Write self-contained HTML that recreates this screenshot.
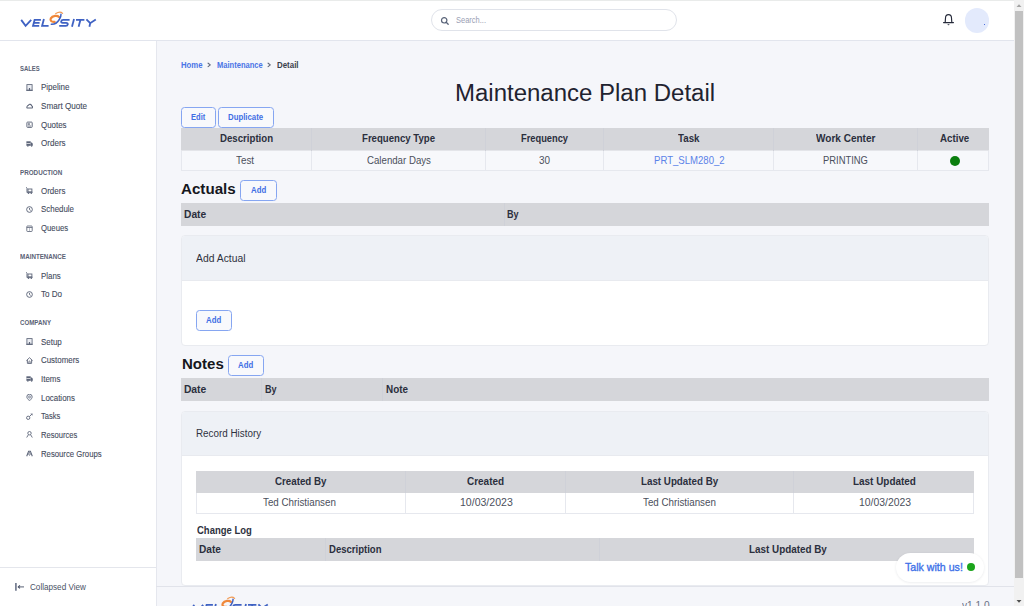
<!DOCTYPE html>
<html><head><meta charset="utf-8">
<style>
*{box-sizing:border-box;margin:0;padding:0}
html,body{width:1024px;height:606px;overflow:hidden;background:#f5f6fa;font-family:"Liberation Sans",sans-serif;position:relative}
.a{position:absolute}
.t{position:absolute;white-space:nowrap;line-height:normal;transform-origin:0 0}
</style></head><body>
<div class="a" style="left:0.00px;top:0.00px;width:1014.00px;height:1.00px;background:#e9ebea"></div>
<div class="a" style="left:0.00px;top:1.00px;width:1014.00px;height:39.00px;background:#fff"></div>
<div class="a" style="left:0.00px;top:40.00px;width:1014.00px;height:1.00px;background:#e2e5ed"></div>
<div class="a" style="left:0.00px;top:41.00px;width:156.00px;height:565.00px;background:#fff"></div>
<div class="a" style="left:156.00px;top:41.00px;width:1.00px;height:565.00px;background:#e5e7ee"></div>
<svg class="a" style="left:0px;top:0px;overflow:visible" width="100" height="35" viewBox="0 0 100 35">
<g fill="none" stroke="#3f62c3" stroke-width="1.8" stroke-linejoin="miter" stroke-linecap="butt">
<path d="M21.2 19.9 L25.6 25.9 L31.2 19.9"/>
<path d="M40.9 19.9 H34.6 L33.0 25.9 H39.2 M33.8 22.9 H39.6"/>
<path d="M43.9 19.1 L42.1 25.9 H48.6"/>
<path d="M69.6 19.9 H63.2 C60.8 19.9 60.4 22.9 62.6 22.9 H66.2 C68.6 22.9 68.2 25.9 65.8 25.9 H59.2"/>
<path d="M74.0 19.1 L72.0 26.7"/>
<path d="M76.0 19.9 H84.4 M80.4 19.9 L78.6 26.7"/>
<path d="M86.4 19.4 L90.2 23.2 L95.8 19.4 M90.2 23.2 L89.4 26.7"/>
</g>
<path d="M59.0 16.9 C57.5 15.2 52.5 15.3 50.8 18.4 C49.8 20.5 51.5 22.3 54.6 21.8" fill="none" stroke="#f0883a" stroke-width="2.2" stroke-linecap="round"/>
<path d="M51.3 24.3 C54 24.5 57.5 22.5 59.3 19.5 C60.6 17.3 61.2 15.5 61 14.2" fill="none" stroke="#3f62c3" stroke-width="1.5" stroke-linecap="round"/>
<path d="M55.8 13.6 C58 12.2 61 11.8 62.6 13.4" fill="none" stroke="#f29a52" stroke-width="1.2" stroke-linecap="round"/>
</svg>
<div class="a" style="left:431.00px;top:9.00px;width:246.00px;height:22.00px;background:#fff;border:1px solid #e0e3ea;border-radius:11px"></div>
<svg class="a" style="left:440px;top:15.5px" width="10" height="10" viewBox="0 0 10 10"><circle cx="4.2" cy="4.3" r="2.7" fill="none" stroke="#5a6479" stroke-width="1.2"/><line x1="6.2" y1="6.3" x2="8.2" y2="8.3" stroke="#5a6479" stroke-width="1.3" stroke-linecap="round"/></svg>
<div class="t" style="left:456.30px;top:15.00px;font-size:8.576px;font-weight:400;color:#9aa0b4;transform:scaleX(0.8746);">Search...</div>
<svg class="a" style="left:942px;top:13px" width="13" height="14" viewBox="0 0 13 14"><path d="M3.2 9.4 L3.5 5.0 C3.6 0.4 9.4 0.4 9.5 5.0 L9.8 9.4" fill="none" stroke="#252a3a" stroke-width="1.15"/><path d="M1.5 9.6 H11.5" stroke="#252a3a" stroke-width="1.05" stroke-linecap="round"/><path d="M5.5 11.2 H7.5 A1 1.1 0 0 1 5.5 11.2Z" fill="#252a3a"/></svg>
<div class="a" style="left:964.50px;top:7.90px;width:24.70px;height:24.70px;background:#e3eafc;border-radius:50%"></div>
<div class="a" style="left:984.00px;top:24.00px;width:1.00px;height:1.00px;background:#4b6fe0"></div>
<div class="t" style="left:19.90px;top:65.00px;font-size:6.831px;font-weight:700;color:#5a6275;transform:scaleX(0.8691);">SALES</div>
<div class="t" style="left:40.90px;top:82.00px;font-size:8.721px;font-weight:400;color:#444b5d;transform:scaleX(0.9180);-webkit-text-stroke:0.1px #444b5d;">Pipeline</div>
<svg class="a" style="left:26px;top:83.80px" width="7" height="7" viewBox="0 0 7 7"><rect x="0.9" y="0.6" width="5.2" height="5.6" fill="#eceef3" stroke="#5d6579" stroke-width="0.85"/><path d="M0.3 6.35 H6.7" stroke="#5d6579" stroke-width="1"/><rect x="2.9" y="4.0" width="1.2" height="2.3" fill="#5d6579"/></svg>
<div class="t" style="left:40.90px;top:101.00px;font-size:8.721px;font-weight:400;color:#444b5d;transform:scaleX(0.9303);-webkit-text-stroke:0.1px #444b5d;">Smart Quote</div>
<svg class="a" style="left:26px;top:102.47px" width="7" height="7" viewBox="0 0 7 7"><path d="M1.1 5.9 H5.9 C6.8 5.9 6.8 4.1 5.8 4.0 C5.5 2.3 3.4 1.6 2.5 3.3 C1.1 3.4 0.4 5.9 1.1 5.9Z" fill="none" stroke="#5d6579" stroke-width="1.05"/></svg>
<div class="t" style="left:40.90px;top:120.00px;font-size:8.721px;font-weight:400;color:#444b5d;transform:scaleX(0.9102);-webkit-text-stroke:0.1px #444b5d;">Quotes</div>
<svg class="a" style="left:26px;top:121.14px" width="7" height="7" viewBox="0 0 7 7"><rect x="0.9" y="1.1" width="5.3" height="5.3" rx="0.7" fill="none" stroke="#5d6579" stroke-width="0.95"/><rect x="2.1" y="2.3" width="1.7" height="1.5" fill="#5d6579"/><path d="M2 5 H5.1" stroke="#5d6579" stroke-width="0.8"/></svg>
<div class="t" style="left:40.90px;top:138.00px;font-size:8.721px;font-weight:400;color:#444b5d;transform:scaleX(0.9233);-webkit-text-stroke:0.1px #444b5d;">Orders</div>
<svg class="a" style="left:26px;top:139.81px" width="7" height="7" viewBox="0 0 7 7"><rect x="0.4" y="1.3" width="4.3" height="4.5" fill="#5d6579"/><path d="M0.4 3.5 H4.7" stroke="#fff" stroke-width="0.7"/><path d="M4.7 2.5 H5.9 L6.8 3.8 V5.8 H4.7Z" fill="#5d6579"/><circle cx="1.9" cy="6.1" r="0.75" fill="#5d6579"/><circle cx="5.6" cy="6.1" r="0.75" fill="#5d6579"/></svg>
<div class="t" style="left:19.90px;top:169.00px;font-size:6.831px;font-weight:700;color:#5a6275;transform:scaleX(0.9193);">PRODUCTION</div>
<div class="t" style="left:40.90px;top:186.00px;font-size:8.721px;font-weight:400;color:#444b5d;transform:scaleX(0.9158);-webkit-text-stroke:0.1px #444b5d;">Orders</div>
<svg class="a" style="left:26px;top:187.21px" width="7" height="7" viewBox="0 0 7 7"><path d="M0.2 0.2 L1.0 1.4 V5.6" fill="none" stroke="#5d6579" stroke-width="0.95"/><rect x="2.0" y="2.0" width="3.9" height="2.9" fill="none" stroke="#5d6579" stroke-width="0.9"/><path d="M1 5.3 H6.6" stroke="#5d6579" stroke-width="1"/><circle cx="2.5" cy="6.2" r="0.8" fill="#5d6579"/><circle cx="5.3" cy="6.2" r="0.8" fill="#5d6579"/></svg>
<div class="t" style="left:40.90px;top:204.00px;font-size:8.721px;font-weight:400;color:#444b5d;transform:scaleX(0.9074);-webkit-text-stroke:0.1px #444b5d;">Schedule</div>
<svg class="a" style="left:26px;top:205.88px" width="7" height="7" viewBox="0 0 7 7"><circle cx="3.5" cy="3.5" r="2.85" fill="none" stroke="#5d6579" stroke-width="0.95"/><path d="M3.5 1.9 V3.6 L4.7 4.4" fill="none" stroke="#5d6579" stroke-width="0.9"/></svg>
<div class="t" style="left:40.90px;top:223.00px;font-size:8.721px;font-weight:400;color:#444b5d;transform:scaleX(0.8899);-webkit-text-stroke:0.1px #444b5d;">Queues</div>
<svg class="a" style="left:26px;top:224.55px" width="7" height="7" viewBox="0 0 7 7"><rect x="0.8" y="1.0" width="5.4" height="5.5" rx="0.7" fill="none" stroke="#5d6579" stroke-width="0.85"/><path d="M0.8 2.5 H6.2" stroke="#5d6579" stroke-width="0.8"/><path d="M3.5 2.5 V6.5" stroke="#8a91a2" stroke-width="0.55"/></svg>
<div class="t" style="left:19.90px;top:253.00px;font-size:6.831px;font-weight:700;color:#5a6275;transform:scaleX(0.9112);">MAINTENANCE</div>
<div class="t" style="left:40.90px;top:271.00px;font-size:8.721px;font-weight:400;color:#444b5d;transform:scaleX(0.9082);-webkit-text-stroke:0.1px #444b5d;">Plans</div>
<svg class="a" style="left:26px;top:271.95px" width="7" height="7" viewBox="0 0 7 7"><path d="M0.2 0.2 L1.0 1.4 V5.6" fill="none" stroke="#5d6579" stroke-width="0.95"/><rect x="2.0" y="2.0" width="3.9" height="2.9" fill="none" stroke="#5d6579" stroke-width="0.9"/><path d="M1 5.3 H6.6" stroke="#5d6579" stroke-width="1"/><circle cx="2.5" cy="6.2" r="0.8" fill="#5d6579"/><circle cx="5.3" cy="6.2" r="0.8" fill="#5d6579"/></svg>
<div class="t" style="left:40.90px;top:289.00px;font-size:8.721px;font-weight:400;color:#444b5d;transform:scaleX(0.9270);-webkit-text-stroke:0.1px #444b5d;">To Do</div>
<svg class="a" style="left:26px;top:290.62px" width="7" height="7" viewBox="0 0 7 7"><circle cx="3.5" cy="3.5" r="2.85" fill="none" stroke="#5d6579" stroke-width="0.95"/><path d="M3.5 1.9 V3.6 L4.7 4.4" fill="none" stroke="#5d6579" stroke-width="0.9"/></svg>
<div class="t" style="left:19.90px;top:319.00px;font-size:6.831px;font-weight:700;color:#5a6275;transform:scaleX(0.9013);">COMPANY</div>
<div class="t" style="left:40.90px;top:337.00px;font-size:8.721px;font-weight:400;color:#444b5d;transform:scaleX(0.9121);-webkit-text-stroke:0.1px #444b5d;">Setup</div>
<svg class="a" style="left:26px;top:338.02px" width="7" height="7" viewBox="0 0 7 7"><rect x="0.9" y="0.6" width="5.2" height="5.6" fill="#eceef3" stroke="#5d6579" stroke-width="0.85"/><path d="M0.3 6.35 H6.7" stroke="#5d6579" stroke-width="1"/><rect x="2.9" y="4.0" width="1.2" height="2.3" fill="#5d6579"/></svg>
<div class="t" style="left:40.90px;top:355.00px;font-size:8.721px;font-weight:400;color:#444b5d;transform:scaleX(0.9083);-webkit-text-stroke:0.1px #444b5d;">Customers</div>
<svg class="a" style="left:26px;top:356.69px" width="7" height="7" viewBox="0 0 7 7"><path d="M0.4 3.7 L3.5 0.7 L6.6 3.7" fill="none" stroke="#5d6579" stroke-width="0.9"/><path d="M1.4 2.8 V6.4 H5.6 V2.8" fill="none" stroke="#5d6579" stroke-width="0.9"/><path d="M2.8 6.4 V4.7 A0.7 0.7 0 0 1 4.2 4.7 V6.4" fill="none" stroke="#5d6579" stroke-width="0.75"/></svg>
<div class="t" style="left:40.90px;top:374.00px;font-size:8.721px;font-weight:400;color:#444b5d;transform:scaleX(0.9145);-webkit-text-stroke:0.1px #444b5d;">Items</div>
<svg class="a" style="left:26px;top:375.36px" width="7" height="7" viewBox="0 0 7 7"><rect x="0.4" y="1.3" width="4.3" height="4.5" fill="#5d6579"/><path d="M0.4 3.5 H4.7" stroke="#fff" stroke-width="0.7"/><path d="M4.7 2.5 H5.9 L6.8 3.8 V5.8 H4.7Z" fill="#5d6579"/><circle cx="1.9" cy="6.1" r="0.75" fill="#5d6579"/><circle cx="5.6" cy="6.1" r="0.75" fill="#5d6579"/></svg>
<div class="t" style="left:40.90px;top:393.00px;font-size:8.721px;font-weight:400;color:#444b5d;transform:scaleX(0.9082);-webkit-text-stroke:0.1px #444b5d;">Locations</div>
<svg class="a" style="left:26px;top:394.03px" width="7" height="7" viewBox="0 0 7 7"><path d="M3.5 6.8 C1.4 4.9 0.8 3.7 0.8 2.9 A2.7 2.7 0 0 1 6.2 2.9 C6.2 3.7 5.6 4.9 3.5 6.8Z" fill="#e9ecf2" stroke="#5d6579" stroke-width="0.85"/><circle cx="3.5" cy="3.0" r="0.95" fill="#fff" stroke="#5d6579" stroke-width="0.7"/></svg>
<div class="t" style="left:40.90px;top:411.00px;font-size:8.721px;font-weight:400;color:#444b5d;transform:scaleX(0.8707);-webkit-text-stroke:0.1px #444b5d;">Tasks</div>
<svg class="a" style="left:26px;top:412.70px" width="7" height="7" viewBox="0 0 7 7"><circle cx="2.2" cy="4.8" r="1.65" fill="none" stroke="#5d6579" stroke-width="0.9"/><path d="M3.4 3.6 L5.4 1.6" stroke="#5d6579" stroke-width="0.9"/><path d="M4.3 0.7 L6.6 0.5 L6.4 2.8Z" fill="#5d6579"/></svg>
<div class="t" style="left:40.90px;top:430.00px;font-size:8.721px;font-weight:400;color:#444b5d;transform:scaleX(0.8684);-webkit-text-stroke:0.1px #444b5d;">Resources</div>
<svg class="a" style="left:26px;top:431.37px" width="7" height="7" viewBox="0 0 7 7"><circle cx="3.5" cy="2.2" r="1.7" fill="none" stroke="#5d6579" stroke-width="0.9"/><path d="M0.7 6.5 L2.3 3.9 M6.3 6.5 L4.7 3.9" stroke="#5d6579" stroke-width="0.9"/></svg>
<div class="t" style="left:40.90px;top:449.00px;font-size:8.721px;font-weight:400;color:#444b5d;transform:scaleX(0.8869);-webkit-text-stroke:0.1px #444b5d;">Resource Groups</div>
<svg class="a" style="left:26px;top:450.04px" width="7" height="7" viewBox="0 0 7 7"><path d="M0.7 6.2 L2.6 1.3 H4.4 L6.3 6.2" fill="none" stroke="#5d6579" stroke-width="1.05"/><ellipse cx="3.5" cy="3.9" rx="0.75" ry="1.4" fill="none" stroke="#5d6579" stroke-width="0.8"/></svg>
<div class="a" style="left:0.00px;top:567.00px;width:156.00px;height:1.00px;background:#e4e6ec"></div>
<svg class="a" style="left:14px;top:582px" width="12" height="10" viewBox="0 0 12 10"><path d="M1.9 1.1 V8.7" stroke="#737b8f" stroke-width="1.7"/><path d="M4.6 4.9 H10.0" stroke="#5d6579" stroke-width="1.05"/><path d="M5.9 3.4 L4.3 4.9 L5.9 6.4" fill="none" stroke="#4a5267" stroke-width="1.15"/></svg>
<div class="t" style="left:29.90px;top:582.00px;font-size:8.576px;font-weight:400;color:#4a5265;transform:scaleX(0.9492);">Collapsed View</div>
<div class="t" style="left:181.10px;top:61.00px;font-size:8.285px;font-weight:700;color:#4a74e6;transform:scaleX(0.9378);">Home</div>
<svg class="a" style="left:205px;top:61px" width="8" height="8" viewBox="0 0 8 8"><path d="M3.1 2.2 L5.3 3.9 L3.1 5.6" fill="none" stroke="#626a7d" stroke-width="1.15" stroke-linecap="round" stroke-linejoin="round"/></svg>
<div class="t" style="left:216.90px;top:61.00px;font-size:8.285px;font-weight:700;color:#4a74e6;transform:scaleX(0.9130);">Maintenance</div>
<svg class="a" style="left:265.2px;top:61px" width="8" height="8" viewBox="0 0 8 8"><path d="M3.1 2.2 L5.3 3.9 L3.1 5.6" fill="none" stroke="#626a7d" stroke-width="1.15" stroke-linecap="round" stroke-linejoin="round"/></svg>
<div class="t" style="left:276.70px;top:61.00px;font-size:8.285px;font-weight:700;color:#3a3f4c;transform:scaleX(0.9568);">Detail</div>
<div class="t" style="left:455.40px;top:79.00px;font-size:24.709px;font-weight:400;color:#1f2330;transform:scaleX(0.9718);">Maintenance Plan Detail</div>
<div class="a" style="left:181.00px;top:107.00px;width:35.00px;height:21.00px;border:1px solid #86a6f1;border-radius:3.5px;background:#f8f9fc"></div>
<div class="t" style="left:191.35px;top:112.00px;font-size:8.576px;font-weight:700;color:#3f6ee4;transform:scaleX(0.8823);">Edit</div>
<div class="a" style="left:218.00px;top:107.00px;width:56.00px;height:21.00px;border:1px solid #86a6f1;border-radius:3.5px;background:#f8f9fc"></div>
<div class="t" style="left:228.40px;top:112.00px;font-size:8.576px;font-weight:700;color:#3f6ee4;transform:scaleX(0.9122);">Duplicate</div>
<div class="a" style="left:181.00px;top:128.00px;width:808.00px;height:22.00px;background:#d5d6da"></div>
<div class="a" style="left:181.00px;top:150.00px;width:808.00px;height:1.00px;background:#e4e5e9"></div>
<div class="a" style="left:181.00px;top:151.00px;width:808.00px;height:20.00px;background:#f7f8fb;border:1px solid #e6e8ee;border-top:none"></div>
<div class="a" style="left:311.00px;top:128.00px;width:1.00px;height:23.00px;background:#cfd1d8"></div>
<div class="a" style="left:311.00px;top:151.00px;width:1.00px;height:20.00px;background:#e6e8ee"></div>
<div class="a" style="left:485.00px;top:128.00px;width:1.00px;height:23.00px;background:#cfd1d8"></div>
<div class="a" style="left:485.00px;top:151.00px;width:1.00px;height:20.00px;background:#e6e8ee"></div>
<div class="a" style="left:603.00px;top:128.00px;width:1.00px;height:23.00px;background:#cfd1d8"></div>
<div class="a" style="left:603.00px;top:151.00px;width:1.00px;height:20.00px;background:#e6e8ee"></div>
<div class="a" style="left:773.00px;top:128.00px;width:1.00px;height:23.00px;background:#cfd1d8"></div>
<div class="a" style="left:773.00px;top:151.00px;width:1.00px;height:20.00px;background:#e6e8ee"></div>
<div class="a" style="left:917.00px;top:128.00px;width:1.00px;height:23.00px;background:#cfd1d8"></div>
<div class="a" style="left:917.00px;top:151.00px;width:1.00px;height:20.00px;background:#e6e8ee"></div>
<div class="t" style="left:220.00px;top:133.00px;font-size:10.320px;font-weight:700;color:#2b2f3d;transform:scaleX(0.9355);">Description</div>
<div class="t" style="left:361.90px;top:133.00px;font-size:10.320px;font-weight:700;color:#2b2f3d;transform:scaleX(0.9327);">Frequency Type</div>
<div class="t" style="left:521.00px;top:133.00px;font-size:10.320px;font-weight:700;color:#2b2f3d;transform:scaleX(0.9010);">Frequency</div>
<div class="t" style="left:678.00px;top:133.00px;font-size:10.320px;font-weight:700;color:#2b2f3d;transform:scaleX(0.9471);">Task</div>
<div class="t" style="left:816.00px;top:133.00px;font-size:10.320px;font-weight:700;color:#2b2f3d;transform:scaleX(0.9715);">Work Center</div>
<div class="t" style="left:939.80px;top:133.00px;font-size:10.320px;font-weight:700;color:#2b2f3d;transform:scaleX(0.9432);">Active</div>
<div class="t" style="left:236.20px;top:155.00px;font-size:10.465px;font-weight:400;color:#4b505c;transform:scaleX(0.9425);">Test</div>
<div class="t" style="left:366.60px;top:155.00px;font-size:10.465px;font-weight:400;color:#4b505c;transform:scaleX(0.9245);">Calendar Days</div>
<div class="t" style="left:539.00px;top:155.00px;font-size:10.465px;font-weight:400;color:#4b505c;transform:scaleX(0.9469);">30</div>
<div class="t" style="left:653.50px;top:155.00px;font-size:10.465px;font-weight:400;color:#5b83e8;transform:scaleX(0.9160);">PRT_SLM280_2</div>
<div class="t" style="left:823.40px;top:155.00px;font-size:10.465px;font-weight:400;color:#4b505c;transform:scaleX(0.8996);">PRINTING</div>
<div class="a" style="left:949.70px;top:155.70px;width:10.30px;height:10.30px;background:#0b7e0e;border-radius:50%"></div>
<div class="t" style="left:181.30px;top:180.00px;font-size:15.262px;font-weight:700;color:#15171d;transform:scaleX(0.9928);">Actuals</div>
<div class="a" style="left:240.00px;top:180.00px;width:37.00px;height:21.00px;border:1px solid #86a6f1;border-radius:3.5px;background:#f8f9fc"></div>
<div class="t" style="left:250.90px;top:185.00px;font-size:8.576px;font-weight:700;color:#3f6ee4;transform:scaleX(0.9113);">Add</div>
<div class="a" style="left:181.00px;top:203.00px;width:808.00px;height:23.00px;background:#d5d6da"></div>
<div class="a" style="left:504.00px;top:203.00px;width:1.00px;height:23.00px;background:#cfd1d8"></div>
<div class="t" style="left:184.00px;top:209.00px;font-size:10.320px;font-weight:700;color:#2b2f3d;transform:scaleX(0.9913);">Date</div>
<div class="t" style="left:507.30px;top:209.00px;font-size:10.320px;font-weight:700;color:#2b2f3d;transform:scaleX(0.8782);">By</div>
<div class="a" style="left:181.00px;top:235.00px;width:808.00px;height:111.00px;background:#fff;border:1px solid #e9ebf0;border-radius:4px"></div>
<div class="a" style="left:182.00px;top:236.00px;width:806.00px;height:45.00px;background:#eef1f6;border-bottom:1px solid #e8eaef;border-radius:3px 3px 0 0"></div>
<div class="t" style="left:196.20px;top:252.00px;font-size:10.610px;font-weight:400;color:#2e3240;transform:scaleX(0.9760);">Add Actual</div>
<div class="a" style="left:196.00px;top:310.00px;width:36.00px;height:21.00px;border:1px solid #86a6f1;border-radius:3.5px;background:#f8f9fc"></div>
<div class="t" style="left:206.40px;top:315.00px;font-size:8.576px;font-weight:700;color:#3f6ee4;transform:scaleX(0.9113);">Add</div>
<div class="t" style="left:181.50px;top:355.00px;font-size:15.262px;font-weight:700;color:#15171d;transform:scaleX(0.9852);">Notes</div>
<div class="a" style="left:228.00px;top:355.00px;width:36.00px;height:21.00px;border:1px solid #86a6f1;border-radius:3.5px;background:#f8f9fc"></div>
<div class="t" style="left:238.40px;top:360.00px;font-size:8.576px;font-weight:700;color:#3f6ee4;transform:scaleX(0.9113);">Add</div>
<div class="a" style="left:181.00px;top:378.00px;width:808.00px;height:23.00px;background:#d5d6da"></div>
<div class="a" style="left:261.00px;top:378.00px;width:1.00px;height:23.00px;background:#cfd1d8"></div>
<div class="a" style="left:382.00px;top:378.00px;width:1.00px;height:23.00px;background:#cfd1d8"></div>
<div class="t" style="left:183.90px;top:384.00px;font-size:10.320px;font-weight:700;color:#2b2f3d;">Date</div>
<div class="t" style="left:264.90px;top:384.00px;font-size:10.320px;font-weight:700;color:#2b2f3d;transform:scaleX(0.8782);">By</div>
<div class="t" style="left:386.20px;top:384.00px;font-size:10.320px;font-weight:700;color:#2b2f3d;transform:scaleX(0.9603);">Note</div>
<div class="a" style="left:181.00px;top:411.00px;width:808.00px;height:175.00px;background:#fff;border:1px solid #e9ebf0;border-radius:4px"></div>
<div class="a" style="left:182.00px;top:412.00px;width:806.00px;height:44.00px;background:#eef1f6;border-bottom:1px solid #e8eaef;border-radius:3px 3px 0 0"></div>
<div class="t" style="left:196.30px;top:427.00px;font-size:10.610px;font-weight:400;color:#2e3240;transform:scaleX(0.9289);">Record History</div>
<div class="a" style="left:196.00px;top:471.00px;width:778.00px;height:22.00px;background:#d5d6da"></div>
<div class="a" style="left:196.00px;top:493.00px;width:778.00px;height:21.00px;background:#fff;border:1px solid #e6e8ee;border-top:none"></div>
<div class="a" style="left:405.00px;top:471.00px;width:1.00px;height:22.00px;background:#cfd1d8"></div>
<div class="a" style="left:405.00px;top:493.00px;width:1.00px;height:21.00px;background:#e6e8ee"></div>
<div class="a" style="left:565.00px;top:471.00px;width:1.00px;height:22.00px;background:#cfd1d8"></div>
<div class="a" style="left:565.00px;top:493.00px;width:1.00px;height:21.00px;background:#e6e8ee"></div>
<div class="a" style="left:793.00px;top:471.00px;width:1.00px;height:22.00px;background:#cfd1d8"></div>
<div class="a" style="left:793.00px;top:493.00px;width:1.00px;height:21.00px;background:#e6e8ee"></div>
<div class="t" style="left:275.40px;top:476.00px;font-size:10.174px;font-weight:700;color:#2b2f3d;transform:scaleX(0.9587);">Created By</div>
<div class="t" style="left:467.30px;top:476.00px;font-size:10.174px;font-weight:700;color:#2b2f3d;transform:scaleX(0.9815);">Created</div>
<div class="t" style="left:641.00px;top:476.00px;font-size:10.174px;font-weight:700;color:#2b2f3d;transform:scaleX(0.9629);">Last Updated By</div>
<div class="t" style="left:853.20px;top:476.00px;font-size:10.174px;font-weight:700;color:#2b2f3d;transform:scaleX(0.9774);">Last Updated</div>
<div class="t" style="left:263.30px;top:497.00px;font-size:10.465px;font-weight:400;color:#4b505c;transform:scaleX(0.9363);">Ted Christiansen</div>
<div class="t" style="left:459.50px;top:497.00px;font-size:10.465px;font-weight:400;color:#4b505c;transform:scaleX(1.0081);">10/03/2023</div>
<div class="t" style="left:643.20px;top:497.00px;font-size:10.465px;font-weight:400;color:#4b505c;transform:scaleX(0.9363);">Ted Christiansen</div>
<div class="t" style="left:859.00px;top:497.00px;font-size:10.465px;font-weight:400;color:#4b505c;transform:scaleX(0.9947);">10/03/2023</div>
<div class="t" style="left:196.60px;top:525.00px;font-size:10.029px;font-weight:700;color:#2e3240;transform:scaleX(0.9471);">Change Log</div>
<div class="a" style="left:196.00px;top:538.00px;width:778.00px;height:23.00px;background:#d5d6da"></div>
<div class="a" style="left:325.00px;top:538.00px;width:1.00px;height:23.00px;background:#cfd1d8"></div>
<div class="a" style="left:599.00px;top:538.00px;width:1.00px;height:23.00px;background:#cfd1d8"></div>
<div class="t" style="left:199.20px;top:544.00px;font-size:10.320px;font-weight:700;color:#2b2f3d;transform:scaleX(0.9824);">Date</div>
<div class="t" style="left:328.80px;top:544.00px;font-size:10.320px;font-weight:700;color:#2b2f3d;transform:scaleX(0.9250);">Description</div>
<div class="t" style="left:749.00px;top:544.00px;font-size:10.174px;font-weight:700;color:#2b2f3d;transform:scaleX(0.9716);">Last Updated By</div>
<div class="a" style="left:156.00px;top:586.00px;width:858.00px;height:1.00px;background:#e1e3ea"></div>
<svg class="a" style="left:171.5px;top:585.3px;overflow:visible" width="100" height="35" viewBox="0 0 100 35">
<g fill="none" stroke="#3f62c3" stroke-width="1.8" stroke-linejoin="miter" stroke-linecap="butt">
<path d="M21.2 19.9 L25.6 25.9 L31.2 19.9"/>
<path d="M40.9 19.9 H34.6 L33.0 25.9 H39.2 M33.8 22.9 H39.6"/>
<path d="M43.9 19.1 L42.1 25.9 H48.6"/>
<path d="M69.6 19.9 H63.2 C60.8 19.9 60.4 22.9 62.6 22.9 H66.2 C68.6 22.9 68.2 25.9 65.8 25.9 H59.2"/>
<path d="M74.0 19.1 L72.0 26.7"/>
<path d="M76.0 19.9 H84.4 M80.4 19.9 L78.6 26.7"/>
<path d="M86.4 19.4 L90.2 23.2 L95.8 19.4 M90.2 23.2 L89.4 26.7"/>
</g>
<path d="M59.0 16.9 C57.5 15.2 52.5 15.3 50.8 18.4 C49.8 20.5 51.5 22.3 54.6 21.8" fill="none" stroke="#f0883a" stroke-width="2.2" stroke-linecap="round"/>
<path d="M51.3 24.3 C54 24.5 57.5 22.5 59.3 19.5 C60.6 17.3 61.2 15.5 61 14.2" fill="none" stroke="#3f62c3" stroke-width="1.5" stroke-linecap="round"/>
<path d="M55.8 13.6 C58 12.2 61 11.8 62.6 13.4" fill="none" stroke="#f29a52" stroke-width="1.2" stroke-linecap="round"/>
</svg>
<div class="t" style="left:961.50px;top:599.00px;font-size:10.610px;font-weight:400;color:#6b7285;transform:scaleX(0.9580);">v1.1.0</div>
<div class="a" style="left:896.00px;top:552.70px;width:87.80px;height:29.50px;background:#fff;border-radius:15px;box-shadow:0 0.5px 2.5px rgba(30,40,60,0.10)"></div>
<div class="t" style="left:904.60px;top:561.00px;font-size:11.483px;font-weight:400;color:#3d70e8;transform:scaleX(0.9261);-webkit-text-stroke:0.35px #3d70e8;">Talk with us!</div>
<div class="a" style="left:967.10px;top:563.00px;width:8.30px;height:8.30px;background:#1ba51b;border-radius:50%"></div>
<div class="a" style="left:1014.00px;top:0.00px;width:10.00px;height:606.00px;background:#f1f1f1"></div>
<div class="a" style="left:1015.00px;top:11.00px;width:8.00px;height:567.00px;background:#c1c1c1"></div>
<svg class="a" style="left:1014px;top:0" width="10" height="11" viewBox="0 0 10 11"><path d="M2.5 7 L5 4.3 L7.5 7Z" fill="#a3a3a3"/></svg>
<svg class="a" style="left:1014px;top:595px" width="10" height="11" viewBox="0 0 10 11"><path d="M2.5 5 L5 7.7 L7.5 5Z" fill="#505050"/></svg>
</body></html>
